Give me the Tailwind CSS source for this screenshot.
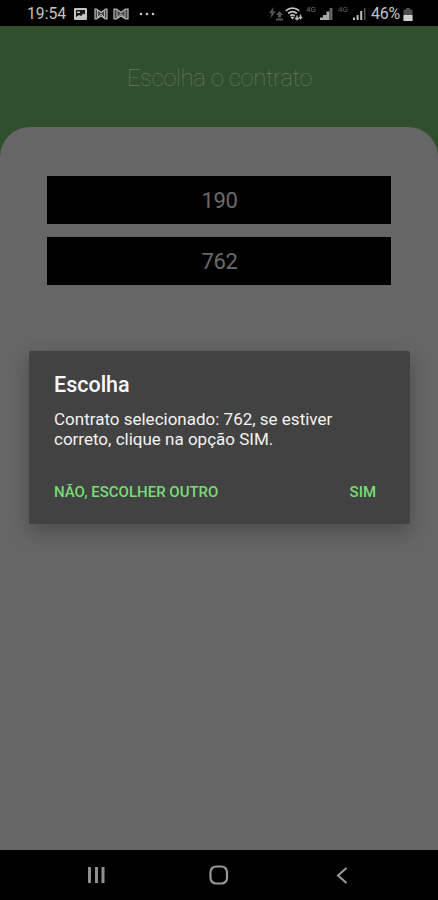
<!DOCTYPE html>
<html lang="pt-BR">
<head>
  <meta charset="UTF-8" />
  <meta name="viewport" content="width=device-width, initial-scale=1.0" />
  <title>Escolha o contrato</title>
  <script src="https://cdn.jsdelivr.net/npm/@tailwindcss/browser@4"></script>
</head>
<body class="relative flex flex-col h-[900px] w-[438px] overflow-hidden bg-[#304f2d] font-['Roboto',sans-serif]">

  <!-- Barra de status -->
  <div class="flex h-[26px] shrink-0 items-center justify-between bg-black pl-[27px] pr-[25px] pt-[2px] text-[#c4c4c4]">
    <div class="flex items-center">
      <span class="w-[47px] text-[15.7px] leading-5">19:54</span>
      <svg class="w-[13px] h-[12px]" viewBox="0 0 13 12">
        <rect width="13" height="12" rx="1" fill="#c4c4c4" />
        <path d="M2 2h9v4.500l-1.500-1-2.500 2.500-2-1L2 9z" fill="#161616" />
        <path d="M3 3.500h3V5H3z" fill="#c4c4c4" />
      </svg>
      <svg class="ml-[7px] w-[14px] h-[12px]" viewBox="0 0 14 12" fill="none" stroke="#b8b8b8">
        <path d="M1 10.800V1.200h1.500L7 4.500l4.500-3.300H13v9.600h-1.500L7 8l-4.500 2.800z" fill="#444" stroke-width="1.200" />
        <path d="M3.500 2.500v7L7 6l3.500 3.500v-7" stroke-width=".9" />
      </svg>
      <svg class="ml-[5px] w-[16px] h-[12px]" viewBox="0 0 16 12" fill="none" stroke="#b8b8b8">
        <path d="M1 10.800V1.200h2.500L8 4.500l4.500-3.300H15v9.600h-2.500L8 8l-4.500 2.800z" fill="#444" stroke-width="1.200" />
        <path d="M4 2.500v7L8 6l4 3.500v-7" stroke-width=".9" />
      </svg>
      <svg class="ml-[10px] w-[16px] h-[4px]" viewBox="0 0 16 4" fill="#c4c4c4">
        <circle cx="2" cy="2" r="1.300" /><circle cx="8" cy="2" r="1.300" /><circle cx="14" cy="2" r="1.300" />
      </svg>
    </div>
    <div class="flex items-center">
      <svg class="w-[15px] h-[14px]" viewBox="0 0 15 14" fill="#555">
        <path d="M4.500 0L0 6h2.500L1.500 11.500 6.500 4.500H4z" />
        <path d="M10.500 4l3.500 4h-2v2.500H9V8H7zM7 11.500h7v2H7z" />
      </svg>
      <svg class="ml-[1px] w-[18px] h-[14px]" viewBox="0 0 18 14" fill="none" stroke="#c0c0c0">
        <path d="M.8 3.800C4.500 .3 10.500 .3 14.200 3.800M3.200 6.500c2.500-2.500 6.100-2.500 8.600 0M5.300 8.900c1.300-1.200 3.100-1.200 4.400 0" stroke-width="1.800" />
        <path d="M7.500 12.500L5.200 9.800h4.600z" fill="#c0c0c0" stroke="none" />
        <path d="M12 8.500v5M10 11.500h4M15.500 7.500v5M13.800 10.500h3.600" stroke-width="1.400" />
      </svg>
      <span class="ml-[3px] w-[14px] -translate-y-[4px] text-[8px] leading-none text-[#707070]">4G</span>
      <svg class="w-[13px] h-[12px]" viewBox="0 0 13 12">
        <path d="M0 12V9.500h3V12zM3 12V7h3.500v5zM6.500 12V3.500h3V12z" fill="#a8a8a8" />
        <path d="M9.500 12V0h3v12z" fill="#606060" />
      </svg>
      <span class="ml-[5px] w-[15px] -translate-y-[4px] text-[8px] leading-none text-[#606060]">4G</span>
      <svg class="w-[13px] h-[12px]" viewBox="0 0 13 12">
        <path d="M0 12V9.500h2V12zM3.600 12V7h2v5zM7.200 12V3h2v9z" fill="#c0c0c0" />
        <path d="M11 12V0h1.500v12z" fill="#555" />
      </svg>
      <span class="ml-[5px] w-[32px] text-[16px] leading-5 tracking-[-0.3px]">46%</span>
      <svg class="w-[10px] h-[13px]" viewBox="0 0 10 13">
        <path d="M3 0h4v1.500h2.500V13H.5V1.500H3z" fill="#4c4c4c" />
        <path d="M.5 7h9v6h-9z" fill="#d0d0d0" />
      </svg>
    </div>
  </div>

  <!-- Cabeçalho -->
  <h1 class="flex h-[101px] shrink-0 items-center justify-center pl-[1px] pt-[2px] text-[24px] tracking-[-0.45px] font-thin text-[#697569]">Escolha o contrato</h1>

  <!-- Lista de contratos -->
  <main class="flex flex-1 flex-col gap-[13px] rounded-t-[30px] bg-[#666666] pt-[49px] pl-[47px] pr-[47px]">
    <button class="h-[48px] bg-black pl-[1px] text-[22px] tracking-[-0.4px] text-[#6a6a6a]">190</button>
    <button class="h-[48px] bg-black pl-[1px] text-[22px] tracking-[-0.4px] text-[#6a6a6a]">762</button>
  </main>

  <!-- Barra de navegação -->
  <nav class="flex h-[50px] shrink-0 items-center bg-black pl-[88px]">
    <svg class="w-[17px] h-[16px]" viewBox="0 0 17 16" fill="#8f8f8f">
      <path d="M0 0h3v16H0zM7 0h3v16H7zM13.500 0h3v16h-3z" />
    </svg>
    <svg class="ml-[104px] w-[20px] h-[20px]" viewBox="0 0 20 20" fill="none" stroke="#979797" stroke-width="2.200">
      <rect x="1.500" y="1.500" width="16.500" height="17" rx="5.500" />
    </svg>
    <svg class="ml-[107px] w-[12px] h-[17px]" viewBox="0 0 12 17" fill="none" stroke="#979797" stroke-width="2.100">
      <path d="M10.500 1L2 8.500l8.500 7.500" />
    </svg>
  </nav>

  <!-- Diálogo de confirmação -->
  <div class="absolute left-[29px] top-[351px] flex h-[173px] w-[381px] flex-col rounded-[2px] bg-[#424242] pl-[25px] pr-[34px] pt-[21px] shadow-[0_8px_20px_1px_rgba(0,0,0,0.24)]">
    <h2 class="text-[21.5px] leading-[26px] font-medium text-[#fafafa]">Escolha</h2>
    <p class="mt-[11px] whitespace-nowrap text-[17px] leading-[20px] text-[#f2f2f2]">Contrato selecionado: 762, se estiver<br />correto, clique na opção SIM.</p>
    <div class="mt-[33px] flex justify-between text-[15px] leading-[20px] font-medium text-[#78dc78]">
      <button>NÃO, ESCOLHER OUTRO</button>
      <button>SIM</button>
    </div>
  </div>

</body>
</html>
